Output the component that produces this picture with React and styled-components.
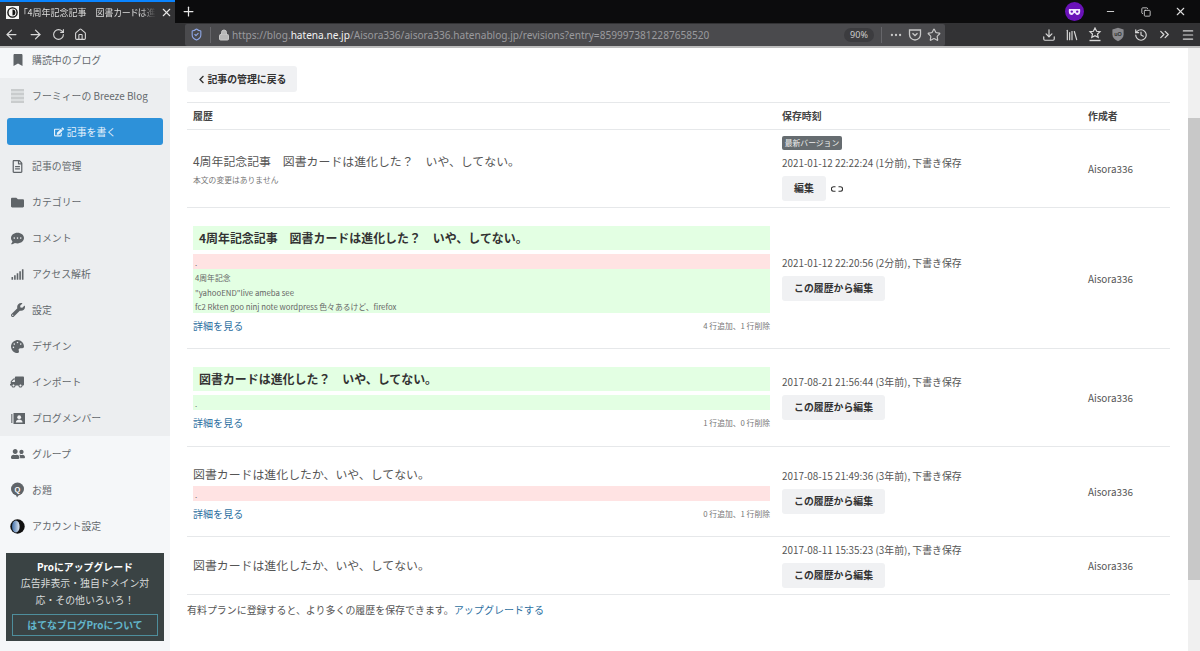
import React from "react";
import styled, { createGlobalStyle } from "styled-components";
import {
  ArrowLeft, ArrowRight, RotateCw, Home, Lock, Plus, X, Minus, Copy, Star, Download,
  Library, ChevronsRight, Menu, History, ShieldCheck, MoreHorizontal,
} from "lucide-react";
import {
  FaBookmark, FaRegFileAlt, FaFolder, FaCommentDots, FaSignal, FaWrench, FaPalette,
  FaTruck, FaUserFriends, FaEdit, FaChevronLeft,
} from "react-icons/fa";

const GlobalStyle = createGlobalStyle`
  html, body { margin: 0; padding: 0; height: 100%; overflow: hidden; }
  body {
    background: #fff;
    color: #555;
    font-family: "Noto Sans CJK JP", "Noto Sans", sans-serif;
    font-size: 10px;
  }
  * { box-sizing: border-box; }
`;

const Page = styled.div`
  width: 1200px;
  height: 651px;
  display: flex;
  flex-direction: column;
  overflow: hidden;
`;

const TabBar = styled.div`
  height: 23px;
  background: #0c0c0d;
  display: flex;
  align-items: stretch;
  color: #e8e8e8;
`;
const Tab = styled.div`
  width: 175px;
  background: #323234;
  border-top: 2px solid #0a84ff;
  display: flex;
  align-items: center;
  padding: 0 6px;
  gap: 4px;
  svg { flex-shrink: 0; }
`;
const TabTitle = styled.span`
  flex: 1;
  font-size: 9px;
  font-feature-settings: "palt";
  white-space: nowrap;
  color: #ddd;
  -webkit-mask-image: linear-gradient(to right, #000 88%, transparent);
  mask-image: linear-gradient(to right, #000 88%, transparent);
`;
const NewTab = styled.span`
  width: 26px;
  display: flex;
  align-items: center;
  justify-content: center;
`;
const WindowControls = styled.div`
  margin-left: auto;
  padding-right: 2px;
  display: flex;
  align-items: center;
  color: #ddd;
`;
const MaskBadge = styled.span`
  width: 19px;
  height: 19px;
  border-radius: 50%;
  background: #6a12b8;
  display: flex;
  align-items: center;
  justify-content: center;
  margin-right: 9px;
`;
const WindowButton = styled.span`
  width: 35px;
  display: flex;
  justify-content: center;
`;

const NavBar = styled.div`
  height: 25px;
  background: #323234;
  border-bottom: 2px solid #bdbdbd;
  display: flex;
  align-items: center;
  color: #d8d8d8;
`;
const NavButtons = styled.div`
  width: 185px;
  padding-left: 4px;
  display: flex;
  align-items: center;
  gap: 9px;
`;
const UrlBar = styled.div`
  width: 760px;
  height: 22px;
  background: #4a4a4d;
  border-radius: 2px;
  display: flex;
  align-items: center;
  padding: 0 4px 0 5px;
  color: #c8c8c8;
`;
const UrlDivider = styled.span`
  width: 1px;
  height: 16px;
  background: #66666a;
  margin: 0 7px;
`;
const UrlText = styled.span`
  flex: 1;
  margin-left: 2px;
  font-family: "Noto Sans", sans-serif;
  font-size: 10.1px;
  color: #9a9a9e;
  white-space: nowrap;
  strong { color: #f2f2f2; font-weight: 400; }
`;
const ZoomPill = styled.span`
  width: 30px;
  height: 14px;
  border-radius: 7px;
  background: #3c3c3f;
  font-family: "Noto Sans", sans-serif;
  font-size: 9px;
  color: #ccc;
  text-align: center;
  line-height: 14px;
`;
const UrlIcons = styled.div`
  display: flex;
  align-items: center;
  gap: 5px;
`;
const ToolIcons = styled.div`
  margin-left: auto;
  padding-right: 5px;
  display: flex;
  align-items: center;
  gap: 9px;
`;

const Body = styled.div`
  flex: 1;
  display: flex;
  min-height: 0;
`;

const Sidebar = styled.nav`
  width: 170px;
  flex-shrink: 0;
  background: #f5f7f9;
`;
const SideGroup = styled.div`
  background: #eceef0;
`;
const SideItem = styled.div`
  height: ${(p) => p.$h || 36}px;
  padding: 0 0 ${(p) => p.$pb || 0}px 11px;
  display: flex;
  align-items: center;
  gap: 8px;
  color: #64696d;
  font-size: 9.9px;
  white-space: nowrap;
  svg { flex-shrink: 0; color: #5f6468; }
`;
const IconSlot = styled.span`
  width: 13px;
  display: flex;
  justify-content: center;
  align-items: center;
  transform: ${(p) => (p.$flip ? "scaleX(-1)" : "none")};
`;
const BlogThumb = styled.span`
  width: 13px;
  height: 14px;
  background: repeating-linear-gradient(0deg, #c9cccd 0 2px, #dcdfe0 2px 4px);
`;
const WriteButton = styled.div`
  margin: 4px 7px 3px 7px;
  height: 27px;
  background: #2d91d9;
  border-radius: 3px;
  color: #e6f2fb;
  display: flex;
  align-items: center;
  justify-content: center;
  gap: 3px;
  font-size: 9.9px;
`;
const ProBox = styled.div`
  margin: 9px 6px 0;
  height: 88px;
  background: #3a4344;
  padding: 6px 6px 5px;
  text-align: center;
  color: #d9dcdc;
  font-size: 9.9px;
  display: flex;
  flex-direction: column;
`;
const ProTitle = styled.div`
  color: #fff;
  font-weight: 700;
  line-height: 16px;
`;
const ProText = styled.div`
  line-height: 16.5px;
`;
const ProLink = styled.div`
  margin-top: auto;
  height: 22px;
  border: 1px solid #4e8e9c;
  color: #62b5cb;
  font-weight: 700;
  line-height: 20px;
`;

const Main = styled.main`
  flex: 1;
  padding: 18px 18px 0 17px;
  min-width: 0;
`;
const BackButton = styled.div`
  width: 110px;
  height: 26px;
  background: #f0f1f3;
  border-radius: 3px;
  display: flex;
  align-items: center;
  justify-content: center;
  gap: 1px;
  color: #333;
  font-weight: 700;
  font-size: 9.9px;
  margin-bottom: 10px;
`;
const Row = styled.div`
  display: grid;
  grid-template-columns: 589px 306px 1fr;
  height: ${(p) => p.$h}px;
  border-bottom: 1px solid #e6e8ea;
  align-items: center;
`;
const HeadRow = styled(Row)`
  border-top: 1px solid #e6e8ea;
  color: #444;
  font-weight: 700;
  font-size: 9.9px;
`;
const Cell = styled.div`
  padding: 0 6px;
`;
const HistoryCell = styled(Cell)`
  align-self: start;
  padding-top: ${(p) => p.$top}px;
`;
const Title = styled.div`
  font-size: 11.9px;
  line-height: 18px;
  color: #555;
  white-space: pre;
  margin-bottom: ${(p) => p.$gap || 0}px;
`;
const AddedTitle = styled.div`
  background: #e3ffe3;
  height: 24px;
  padding-left: 6px;
  font-size: 11.95px;
  font-weight: 700;
  line-height: 24px;
  color: #333;
  white-space: pre;
  margin-bottom: 4px;
`;
const DiffLine = styled.div`
  background: ${(p) => (p.$removed ? "#ffe3e3" : "#e3ffe3")};
  height: ${(p) => p.$h || 14.5}px;
  padding: 3px 0 0 2px;
  font-size: 7.8px;
  line-height: ${(p) => (p.$h || 14.5) - 3}px;
  color: #666;
  white-space: pre;
`;
const NoChange = styled.div`
  font-size: 7.8px;
  line-height: 12px;
  color: #777;
  margin-top: 4px;
`;
const DiffFoot = styled.div`
  display: flex;
  justify-content: space-between;
  align-items: center;
  margin-top: 6px;
  line-height: 14px;
`;
const Link = styled.a`
  color: #2d6f9f;
  font-size: 10.05px;
`;
const DiffCount = styled.span`
  color: #777;
  font-size: 7.8px;
`;
const Badge = styled.span`
  display: block;
  width: 60px;
  height: 14px;
  background: #666c70;
  border-radius: 2px;
  color: #eee;
  font-size: 7.8px;
  line-height: 14px;
  text-align: center;
  margin-bottom: 6px;
`;
const SavedAt = styled.div`
  font-size: 9.9px;
  line-height: 14px;
  color: #555;
  margin-bottom: 6px;
  white-space: nowrap;
`;
const Actions = styled.div`
  display: flex;
  align-items: center;
  gap: 5px;
`;
const EditButton = styled.div`
  height: 25px;
  padding: 0 12px;
  background: #f0f1f3;
  border-radius: 3px;
  color: #333;
  font-size: 9.9px;
  font-weight: 700;
  line-height: 25px;
`;
const Author = styled.span`
  font-size: 9.9px;
  color: #555;
`;
const Note = styled.p`
  margin: 8px 0 0;
  font-size: 9.95px;
  line-height: 14px;
  color: #555;
`;
const Scrollbar = styled.div`
  width: 12px;
  flex-shrink: 0;
  background: #f0f0f0;
  padding: 70px 0 71px;
  display: flex;
`;
const ScrollThumb = styled.div`
  flex: 1;
  background: #c8c8c8;
`;

const FaviconIcon = () => (
  <svg width="13" height="13" viewBox="0 0 13 13">
    <rect width="13" height="13" fill="#f5f5f5" />
    <circle cx="6.5" cy="6.5" r="4.6" fill="none" stroke="#111" strokeWidth="1.4" />
    <path d="M6.5 3.6a2.9 2.9 0 0 1 0 5.8z" fill="#111" />
  </svg>
);
const TopicIcon = () => (
  <svg width="15" height="16" viewBox="0 0 15 16">
    <circle cx="7.5" cy="7" r="6.5" fill="#5f6468" />
    <path d="M6 13l1 2.6 1.8-2.6z" fill="#5f6468" />
    <text x="7.5" y="9.6" textAnchor="middle" fontSize="7.5" fontWeight="700" fill="#fff" fontFamily="Liberation Sans, sans-serif">Q</text>
  </svg>
);
const AccountIcon = () => (
  <svg width="15" height="15" viewBox="0 0 15 15">
    <defs>
      <linearGradient id="acct" x1="0" x2="1" y1="0" y2="0">
        <stop offset="0" stopColor="#3f6ea8" />
        <stop offset="1" stopColor="#dfe8f3" />
      </linearGradient>
    </defs>
    <circle cx="7.5" cy="7.5" r="7.2" fill="#111" />
    <ellipse cx="5.8" cy="7.5" rx="3.8" ry="6" fill="url(#acct)" />
  </svg>
);
const MemberIcon = () => (
  <svg width="14" height="13" viewBox="0 0 14 13">
    <path d="M0 2h1.5v9H0z" fill="#8a8e92" />
    <rect x="2.5" y="1" width="11.5" height="11" fill="#5f6468" />
    <circle cx="8.2" cy="5.2" r="1.9" fill="#f0f1f3" />
    <path d="M4.8 10.4c.3-2 1.6-2.8 3.4-2.8s3.1.8 3.4 2.8z" fill="#f0f1f3" />
  </svg>
);
const MaskIcon = () => (
  <svg width="13" height="8" viewBox="0 0 13 8">
    <path d="M1 1h11c.6 3 0 6-2.6 6C7.6 7 7.4 5 6.5 5S5.4 7 3.6 7C1 7 .4 4 1 1z" fill="#f3e8ff" />
    <circle cx="3.8" cy="3.6" r="1.2" fill="#6a12b8" />
    <circle cx="9.2" cy="3.6" r="1.2" fill="#6a12b8" />
  </svg>
);
const PocketIcon = () => (
  <svg width="14" height="14" viewBox="0 0 14 14" fill="none" stroke="currentColor" strokeWidth="1.3">
    <path d="M1.5 2h11v4.5a5.5 5.5 0 0 1-11 0z" />
    <path d="M4.5 5.2L7 7.5l2.5-2.3" />
  </svg>
);
const StarTrayIcon = () => (
  <svg width="14" height="15" viewBox="0 0 14 15" fill="none" stroke="currentColor" strokeWidth="1.2">
    <path d="M7 1l1.6 3.3 3.4.4-2.5 2.3.7 3.3L7 8.7l-3.2 1.6.7-3.3L2 4.7l3.4-.4z" />
    <path d="M1.5 13.5h11" strokeWidth="1.4" />
  </svg>
);
const BlockerIcon = () => (
  <svg width="14" height="15" viewBox="0 0 14 15">
    <path d="M7 .8l5.6 1.6v5.2c0 3.2-2.4 5.4-5.6 6.6-3.2-1.2-5.6-3.4-5.6-6.6V2.4z" fill="#8a8a8e" />
    <text x="7" y="9.4" textAnchor="middle" fontSize="5.5" fontWeight="700" fill="#323234" fontFamily="Liberation Sans, sans-serif">uO</text>
  </svg>
);
const PermalinkIcon = () => (
  <svg width="12" height="6" viewBox="0 0 12 6" fill="none" stroke="#333" strokeWidth="1.1">
    <path d="M4.5.8H2.6a2.2 2.2 0 0 0 0 4.4h1.9" />
    <path d="M7.5.8h1.9a2.2 2.2 0 0 1 0 4.4H7.5" />
  </svg>
);

const groupItems = [
  [<FaRegFileAlt size={13} />, "記事の管理"],
  [<FaFolder size={13} />, "カテゴリー"],
  [<FaCommentDots size={13} />, "コメント"],
  [<FaSignal size={13} />, "アクセス解析"],
  [<FaWrench size={14} />, "設定"],
  [<FaPalette size={13} />, "デザイン"],
  [<FaTruck size={14} />, "インポート", true],
  [<MemberIcon />, "ブログメンバー"],
];

const revisions = [
  {
    h: 78,
    time: "2021-01-12 22:22:24 (1分前), 下書き保存",
    latest: true,
    history: (
      <HistoryCell $top={22}>
        <Title>4周年記念記事　図書カードは進化した？　いや、してない。</Title>
        <NoChange>本文の変更はありません</NoChange>
      </HistoryCell>
    ),
  },
  {
    h: 141,
    time: "2021-01-12 22:20:56 (2分前), 下書き保存",
    history: (
      <HistoryCell $top={18}>
        <AddedTitle>4周年記念記事　図書カードは進化した？　いや、してない。</AddedTitle>
        <DiffLine $removed $h={15}>.</DiffLine>
        <DiffLine>4周年記念</DiffLine>
        <DiffLine>"yahooEND"live ameba see</DiffLine>
        <DiffLine>fc2 Rkten goo ninj note wordpress 色々あるけど、firefox</DiffLine>
        <DiffFoot>
          <Link>詳細を見る</Link>
          <DiffCount>4 行追加、1 行削除</DiffCount>
        </DiffFoot>
      </HistoryCell>
    ),
  },
  {
    h: 98,
    time: "2017-08-21 21:56:44 (3年前), 下書き保存",
    history: (
      <HistoryCell $top={18}>
        <AddedTitle>図書カードは進化した？　いや、してない。</AddedTitle>
        <DiffLine $h={15}>.</DiffLine>
        <DiffFoot>
          <Link>詳細を見る</Link>
          <DiffCount>1 行追加、0 行削除</DiffCount>
        </DiffFoot>
      </HistoryCell>
    ),
  },
  {
    h: 90,
    time: "2017-08-15 21:49:36 (3年前), 下書き保存",
    history: (
      <HistoryCell $top={18}>
        <Title $gap={3}>図書カードは進化したか、いや、してない。</Title>
        <DiffLine $removed $h={15}>.</DiffLine>
        <DiffFoot>
          <Link>詳細を見る</Link>
          <DiffCount>0 行追加、1 行削除</DiffCount>
        </DiffFoot>
      </HistoryCell>
    ),
  },
  {
    h: 58,
    time: "2017-08-11 15:35:23 (3年前), 下書き保存",
    history: (
      <HistoryCell $top={19}>
        <Title>図書カードは進化したか、いや、してない。</Title>
      </HistoryCell>
    ),
  },
];

export default function App() {
  return (
    <Page>
      <GlobalStyle />
      <TabBar>
        <Tab>
          <FaviconIcon />
          <TabTitle>「4周年記念記事　図書カードは進</TabTitle>
          <X size={13} />
        </Tab>
        <NewTab><Plus size={15} /></NewTab>
        <WindowControls>
          <MaskBadge><MaskIcon /></MaskBadge>
          <WindowButton><Minus size={11} /></WindowButton>
          <WindowButton><Copy size={10} /></WindowButton>
          <WindowButton><X size={13} /></WindowButton>
        </WindowControls>
      </TabBar>
      <NavBar>
        <NavButtons>
          <ArrowLeft size={15} />
          <ArrowRight size={15} />
          <RotateCw size={13} />
          <Home size={13} />
        </NavButtons>
        <UrlBar>
          <ShieldCheck size={13} color="#8fa8e8" />
          <UrlDivider />
          <Lock size={12} fill="#b8b8b8" />
          <UrlText>
            https://blog.<strong>hatena.ne.jp</strong>/Aisora336/aisora336.hatenablog.jp/revisions?entry=8599973812287658520
          </UrlText>
          <ZoomPill>90%</ZoomPill>
          <UrlDivider />
          <UrlIcons>
            <MoreHorizontal size={14} />
            <PocketIcon />
            <Star size={14} />
          </UrlIcons>
        </UrlBar>
        <ToolIcons>
          <Download size={14} />
          <Library size={14} />
          <StarTrayIcon />
          <BlockerIcon />
          <History size={14} />
          <ChevronsRight size={15} />
          <Menu size={14} />
        </ToolIcons>
      </NavBar>
      <Body>
        <Sidebar>
          <SideItem $h={30} $pb={6}><IconSlot><FaBookmark size={12} /></IconSlot>購読中のブログ</SideItem>
          <SideGroup>
            <SideItem><IconSlot><BlogThumb /></IconSlot>フーミィーの Breeze Blog</SideItem>
            <WriteButton><FaEdit size={10} />記事を書く</WriteButton>
            {groupItems.map(([icon, label, flip]) => (
              <SideItem key={label}><IconSlot $flip={flip}>{icon}</IconSlot>{label}</SideItem>
            ))}
          </SideGroup>
          <SideItem><IconSlot><FaUserFriends size={14} /></IconSlot>グループ</SideItem>
          <SideItem><IconSlot><TopicIcon /></IconSlot>お題</SideItem>
          <SideItem><IconSlot><AccountIcon /></IconSlot>アカウント設定</SideItem>
          <ProBox>
            <ProTitle>Proにアップグレード</ProTitle>
            <ProText>広告非表示・独自ドメイン対<br />応・その他いろいろ！</ProText>
            <ProLink>はてなブログProについて</ProLink>
          </ProBox>
        </Sidebar>
        <Main>
          <BackButton><FaChevronLeft size={9} />記事の管理に戻る</BackButton>
          <HeadRow $h={28}>
            <Cell>履歴</Cell>
            <Cell>保存時刻</Cell>
            <Cell>作成者</Cell>
          </HeadRow>
          {revisions.map((rev) => (
            <Row key={rev.time} $h={rev.h}>
              {rev.history}
              <Cell>
                {rev.latest && <Badge>最新バージョン</Badge>}
                <SavedAt>{rev.time}</SavedAt>
                <Actions>
                  <EditButton>{rev.latest ? "編集" : "この履歴から編集"}</EditButton>
                  {rev.latest && <PermalinkIcon />}
                </Actions>
              </Cell>
              <Cell><Author>Aisora336</Author></Cell>
            </Row>
          ))}
          <Note>有料プランに登録すると、より多くの履歴を保存できます。<Link>アップグレードする</Link></Note>
        </Main>
        <Scrollbar><ScrollThumb /></Scrollbar>
      </Body>
    </Page>
  );
}
